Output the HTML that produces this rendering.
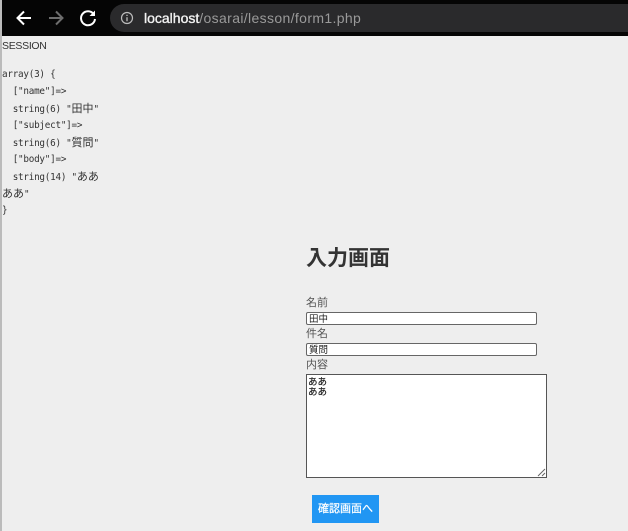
<!DOCTYPE html>
<html lang="ja"><head><meta charset="utf-8">
<style>
html,body{margin:0;padding:0}
body{width:628px;height:531px;position:relative;overflow:hidden;background:#eee;font-family:"Liberation Sans","Noto Sans CJK JP",sans-serif;color:#333}
div{position:absolute;white-space:pre}
.m{font-family:"DejaVu Sans Mono","Noto Sans CJK JP",monospace;font-size:9.3px;letter-spacing:-.25px;line-height:17px;color:#333;left:2px;height:17px}
.m span{font-size:11px;letter-spacing:0}
.l{font-size:11px;line-height:14px;color:#555;left:306px}
.i{left:306px;height:11px;border:1px solid #666;background:#fff;border-radius:2px;font-size:9.5px;line-height:14px;color:#222;padding-left:2px;width:227px;overflow:hidden}
</style></head><body>
<div style="left:0;top:0;width:628px;height:36px;background:#050505"></div>
<div style="left:110px;top:4px;width:518px;height:28px;background:#2a2a2c;border-radius:14px 0 0 14px"></div>
<div style="left:0;top:0;width:1.5px;height:531px;background:#bbb"></div>
<svg style="position:absolute;left:0;top:0" width="110" height="36" viewBox="0 0 110 36" fill="none">
<path d="M31 18H18M24 11.5L17.5 18L24 24.5" stroke="#fff" stroke-width="2"/>
<path d="M49 18H62M56 11.5L62.5 18L56 24.5" stroke="#6d6d6d" stroke-width="2"/>
<path d="M93.6 14A7 7 0 1 0 95 19" stroke="#fff" stroke-width="2"/>
<path d="M95 10.5V16H89.5Z" fill="#fff"/>
</svg>
<svg style="position:absolute;left:120px;top:11px" width="14" height="14" viewBox="0 0 14 14" fill="none">
<circle cx="7" cy="7" r="5.5" stroke="#bdbdbd" stroke-width="1.2"/>
<path d="M7 6.2V10.2M7 3.8V5" stroke="#bdbdbd" stroke-width="1.3"/>
</svg>
<div style="left:144px;top:10px;font-size:14px;line-height:17px;color:#9a9a9a;letter-spacing:.36px"><span style="color:#f2f2f2;letter-spacing:0;-webkit-text-stroke:.35px #f2f2f2">localhost</span>/osarai/lesson/form1.php</div>
<div style="left:2px;top:40px;font-size:10.5px;letter-spacing:-.3px;line-height:13px;color:#333">SESSION</div>
<div class="m" style="top:66px">array(3) {</div>
<div class="m" style="top:83px">  ["name"]=&gt;</div>
<div class="m" style="top:100px">  string(6) "<span>田中</span>"</div>
<div class="m" style="top:117px">  ["subject"]=&gt;</div>
<div class="m" style="top:134px">  string(6) "<span>質問</span>"</div>
<div class="m" style="top:151px">  ["body"]=&gt;</div>
<div class="m" style="top:168px">  string(14) "<span>ああ</span></div>
<div class="m" style="top:185px"><span>ああ</span>"</div>
<div class="m" style="top:202px">}</div>
<div style="left:306px;top:245px;font-size:21px;line-height:28px;font-weight:700;color:#333">入力画面</div>
<div class="l" style="top:296px">名前</div>
<div class="i" style="top:312px">田中</div>
<div class="l" style="top:327px">件名</div>
<div class="i" style="top:343px">質問</div>
<div class="l" style="top:358px">内容</div>
<div style="left:306px;top:374px;width:239px;height:102px;border:1px solid #555;background:#fff;font-size:9.5px;line-height:10px;color:#222;-webkit-text-stroke:.2px #222"><div style="left:1px;top:3px">ああ
ああ</div></div>
<svg style="position:absolute;left:537px;top:468px" width="9" height="9" viewBox="0 0 9 9" fill="none"><path d="M1 8L8 1M5 8L8 5" stroke="#666" stroke-width="1"/></svg>
<div style="left:312px;top:495px;width:67px;height:28px;background:#2196f3;color:#fff;font-size:11px;line-height:28px;text-align:center;-webkit-text-stroke:.2px #fff">確認画面へ</div>
</body></html>
